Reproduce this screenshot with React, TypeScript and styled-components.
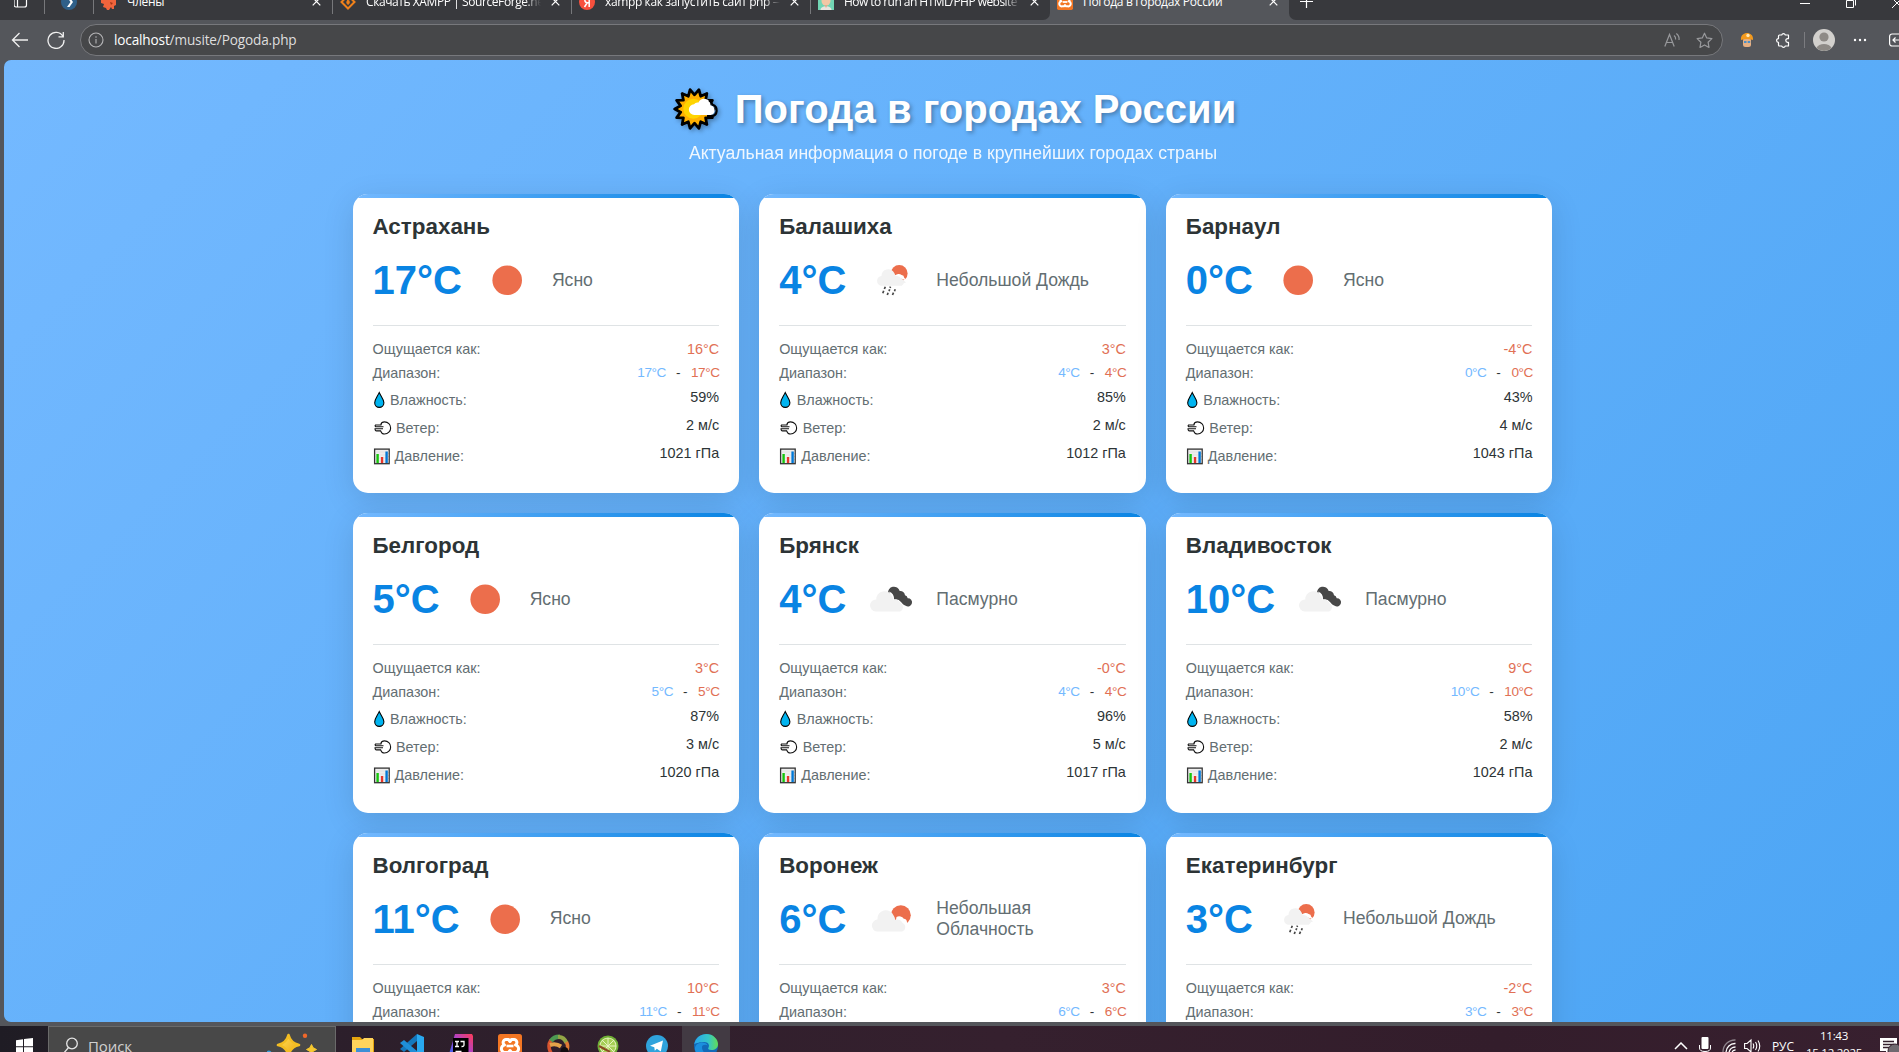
import React from "react";
import styled, { createGlobalStyle, css } from "styled-components";

const Global = createGlobalStyle`
  *, *::before, *::after { box-sizing: border-box; }
  html, body { margin: 0; padding: 0; overflow: hidden; background: #54565b; }
`;

const UI_FONT = `"Open Sans", "Noto Sans", sans-serif`;
const PAGE_FONT = `"Liberation Sans", Arial, sans-serif`;

const Desktop = styled.div`
  display: flex;
  flex-direction: column;
  width: 1899px;
  height: 1052px;
  overflow: hidden;
  background: #54565b;
  font-family: ${UI_FONT};
`;

/* ---------- tab strip ---------- */

const TabStrip = styled.div`
  display: flex;
  align-items: flex-end;
  flex: none;
  height: 20px;
  overflow: hidden;
  background: #54565b;
  color: #fff;
`;

const tabSeparator = css`
  border-right: 1px solid transparent;
  border-image: linear-gradient(to bottom, #77787b 0 30px, transparent 30px) 1;
`;

const StripCell = styled.div<{ $w: number }>`
  display: flex;
  align-items: center;
  justify-content: center;
  flex: none;
  width: ${(p) => p.$w}px;
  height: 37px;
  background: #38393d;
  ${tabSeparator}
`;

const Tab = styled.div<{ $active?: boolean; $last?: boolean }>`
  display: flex;
  align-items: center;
  flex: none;
  gap: 10px;
  width: 239px;
  height: 37px;
  padding: 0 11px 0 7px;
  font-size: 12px;
  background: ${(p) => (p.$active ? "#54565b" : "#38393d")};
  ${(p) => p.$last && "border-bottom-right-radius: 7px;"}
  ${(p) => !p.$active && !p.$last && tabSeparator}
`;

const TabTitle = styled.span<{ $fade?: boolean; $spacing?: number }>`
  flex: 1;
  overflow: hidden;
  white-space: nowrap;
  line-height: 18px;
  letter-spacing: ${(p) => p.$spacing ?? -0.3}px;
  ${(p) =>
    p.$fade &&
    css`
      mask-image: linear-gradient(to right, #000 calc(100% - 16px), transparent);
    `}
`;

const StripEnd = styled.div`
  display: flex;
  align-items: center;
  justify-content: space-between;
  flex: 1;
  min-width: 0;
  height: 37px;
  padding-left: 11px;
  border-bottom-left-radius: 7px;
  background: #38393d;
`;

const WindowButtons = styled.div`
  display: flex;
  align-items: center;
  gap: 36px;
  margin-right: -3px;
  svg { flex: none; }
`;

/* ---------- toolbar ---------- */

const Toolbar = styled.div`
  display: flex;
  align-items: center;
  flex: none;
  height: 40px;
  padding-left: 11px;
  background: #54565b;
  color: #f0f0f0;
  svg { flex: none; }
`;

const NavButtons = styled.div`
  display: flex;
  align-items: center;
  flex: none;
  gap: 18px;
  width: 69px;
`;

const AddressBar = styled.div`
  display: flex;
  align-items: center;
  flex: none;
  width: 1643px;
  height: 32px;
  padding: 0 9px 0 7px;
  border: 1px solid #77787c;
  border-radius: 16px;
  background: #464749;
`;

const Url = styled.span`
  flex: 1;
  margin-left: 10px;
  font-size: 13.6px;
  letter-spacing: -0.15px;
  line-height: 20px;
  color: #dedede;
  b { font-weight: 400; color: #fff; }
`;

const BarIcons = styled.div`
  display: flex;
  align-items: center;
  gap: 15px;
  color: #98999c;
`;

const Actions = styled.div`
  display: flex;
  align-items: center;
  flex: none;
  margin-left: 9px;
`;

const ActionSlot = styled.span<{ $w: number }>`
  display: flex;
  justify-content: center;
  flex: none;
  width: ${(p) => p.$w}px;
`;

const Rule = styled.span`
  width: 1px;
  height: 16px;
  background: #7b7c80;
`;

/* ---------- weather page ---------- */

const Viewport = styled.main`
  flex: none;
  height: 962px;
  margin-left: 4px;
  padding-left: 2px;
  overflow: hidden;
  border-radius: 7px 0 0 7px;
  background: linear-gradient(135deg, #74b9ff, #0984e3) 0 0 / 1895px 5800px no-repeat;
  font-family: ${PAGE_FONT};
`;

const Header = styled.header`
  display: flex;
  flex-direction: column;
  align-items: center;
  height: 134px;
  padding: 26px 0 0 1px;
  color: #fff;
`;

const Heading = styled.h1`
  display: flex;
  align-items: center;
  gap: 16px;
  margin: 0;
  padding-left: 3px;
  font-size: 40px;
  line-height: 46px;
  font-weight: 700;
  letter-spacing: 0.03px;
  white-space: nowrap;
  text-shadow: 2px 2px 4px rgba(0, 0, 0, 0.3);
  svg { filter: drop-shadow(2px 2px 2px rgba(0, 0, 0, 0.3)); }
`;

const Subtitle = styled.p`
  margin: 11px 0 0;
  font-size: 17.6px;
  line-height: 20px;
  opacity: 0.9;
  white-space: nowrap;
`;

const Grid = styled.section`
  display: grid;
  grid-template-columns: repeat(3, 1fr);
  gap: 20px;
  width: 1200px;
  margin: 0 auto;
`;

const Card = styled.article`
  height: 299.3px;
  padding: 0 20px;
  overflow: hidden;
  border-radius: 15px;
  background: #fff;
  box-shadow: 0 8px 32px rgba(0, 0, 0, 0.12);
  &::before {
    content: "";
    display: block;
    height: 4px;
    margin: 0 -20px 16px;
    background: linear-gradient(90deg, #74b9ff, #0984e3);
  }
`;

const CityName = styled.h2`
  margin: 0 0 10px;
  font-size: 22.4px;
  line-height: 26px;
  font-weight: 700;
  color: #2d3436;
`;

const Current = styled.div`
  display: flex;
  align-items: center;
  gap: 15px;
  height: 75px;
  padding-bottom: 15px;
  svg { flex: none; }
`;

const Temp = styled.span`
  flex: none;
  font-size: 40px;
  font-weight: 700;
  line-height: 46px;
  color: #0984e3;
`;

const Condition = styled.span`
  font-size: 17.6px;
  line-height: 21px;
  color: #636e72;
`;

const Details = styled.dl`
  display: flex;
  flex-direction: column;
  gap: 8px;
  margin: 0;
  padding-top: 15px;
  border-top: 1px solid #dfe3e5;
`;

const Row = styled.div`
  display: flex;
  justify-content: space-between;
  align-items: flex-start;
  font-size: 14.4px;
  line-height: 16px;
`;

const Label = styled.dt<{ $tall?: boolean }>`
  display: flex;
  align-items: center;
  height: ${(p) => (p.$tall ? 20 : 16)}px;
  padding-top: ${(p) => (p.$tall ? 2 : 0)}px;
  color: #636e72;
  svg { flex: none; }
`;

const Value = styled.dd<{ $hot?: boolean }>`
  margin: 0;
  color: ${(p) => (p.$hot ? "#e17055" : "#2d3436")};
`;

const Range = styled.dd`
  display: flex;
  gap: 10px;
  margin: 0;
  font-size: 13.6px;
  letter-spacing: -0.45px;
  line-height: 15px;
  color: #2d3436;
`;

const Low = styled.span` color: #74b9ff; `;
const High = styled.span`
  margin-right: -0.45px;
  padding-left: 1px;
  color: #e17055;
`;

/* ---------- taskbar ---------- */

const Taskbar = styled.footer`
  display: flex;
  flex: none;
  height: 40px;
  margin-top: 4px;
  background: linear-gradient(90deg, #1f1c24 0, #2c1f2b 330px, #35202e 1000px, #331d2b 1500px, #38202f 1899px);
  color: #fff;
  svg { flex: none; }
`;

const StartButton = styled.div`
  display: flex;
  align-items: center;
  justify-content: center;
  width: 48px;
  height: 40px;
`;

const SearchBox = styled.div`
  display: flex;
  align-items: center;
  width: 288px;
  height: 40px;
  padding: 0 16px 0 14px;
  border: 1px solid #6a6a6a;
  background: #484848;
`;

const SearchText = styled.span`
  flex: 1;
  margin-left: 9px;
  font-size: 15px;
  letter-spacing: -0.1px;
  color: #d0d0d0;
`;

const Apps = styled.div`
  display: flex;
  margin-left: 3px;
  flex: 1;
`;

const AppButton = styled.div<{ $active?: boolean }>`
  display: flex;
  align-items: center;
  justify-content: center;
  width: 48px;
  margin-right: 1px;
  height: 40px;
  background: ${(p) => (p.$active ? "#423a43" : "transparent")};
`;

const Tray = styled.div`
  display: flex;
  align-items: center;
  height: 40px;
  margin-right: -3px;
  font-size: 12px;
`;

const Lang = styled.span`
  width: 24px;
  margin-left: 10px;
  letter-spacing: -0.1px;
`;

const Clock = styled.div`
  width: 74px;
  margin: -3px 9px 0 1px;
  text-align: center;
  font-size: 11.6px;
  letter-spacing: -0.3px;
  line-height: 16.5px;
`;

/* ---------- drawings ---------- */

const CloseMark = () => (
  <svg width="9" height="9" viewBox="0 0 9 9" stroke="#fff" strokeWidth="1.2" fill="none">
    <path d="M.7.7l7.6 7.6M8.3.7L.7 8.3" />
  </svg>
);

const Sun = () => (
  <svg width="60" height="60" viewBox="0 0 60 60">
    <circle cx="30.2" cy="30.3" r="14.8" fill="#ec6e4c" />
  </svg>
);

const FewClouds = () => (
  <svg width="60" height="60" viewBox="0 0 60 60">
    <circle cx="39.8" cy="26.3" r="10" fill="#ec6e4c" />
    <path d="M34 36l1.500-8a5.500 5.500 0 0 1 7.300 1.800 3.600 3.600 0 0 1 3.200 3.400 4 4 0 0 1 2.200 3.300L45 42z" fill="#fff" />
    <path d="M16 42.600a6.100 6.100 0 0 1 .4-12.100 8.400 8.400 0 0 1 16.200-3.900 8.600 8.600 0 0 1 1.600 4.200 6.800 6.800 0 0 1 7.400 3.200 4.700 4.700 0 0 1-.3 8.600z" fill="#f2f2f2" />
  </svg>
);

const LightRain = () => (
  <svg width="60" height="60" viewBox="0 0 60 60">
    <circle cx="38.2" cy="23.400" r="8.400" fill="#ec6e4c" />
    <path d="M33 31l-.5-5.500a7 7 0 0 1 5.500-.5l3 4 4 3.500-3 1z" fill="#f2f2f2" />
    <path d="M34 26a4.400 4.400 0 0 1 6.600-1 3 3 0 0 1 2.600 2.800 3.600 3.600 0 0 1 1.800 2.700z" fill="#fff" />
    <path d="M19.800 35.700a5 5 0 0 1 .7-9.800 6.700 6.700 0 0 1 12.600-3.100 7 7 0 0 1 1.200 3.400 5.700 5.700 0 0 1 6.200 2.700 3.700 3.700 0 0 1 .3 6.800z" fill="#f2f2f2" />
    <g stroke="#484848" strokeWidth="1.700" fill="none">
      <path d="M24.300 36.800l-.9 2.200M22.700 40.800l-.9 2.400M28.700 39.300l-.7 1.800M27.100 42.800l-.8 2.200M34.200 39.300l-.7 1.900M32.500 42.600l-1 2.400" />
      <path d="M29.500 36.600l-.5 1.200" />
    </g>
  </svg>
);

const Overcast = () => (
  <svg width="60" height="60" viewBox="0 0 60 60">
    <path d="M27 24.500a6 6 0 0 1 11.700-2.500 4.600 4.600 0 0 1 5.300 4.200 3.600 3.600 0 0 1 2.700 3 4.100 4.100 0 1 1-2 7.500l-9-4z" fill="#484848" />
    <path d="M28 22.500a8 8 0 0 1 5 8 6.600 6.600 0 0 1 7 2.400l3.500 4.100-10 1z" fill="#fff" />
    <path d="M14.700 42.400a6 6 0 0 1 .6-12 8.200 8.200 0 0 1 15.600-3.500 8 8 0 0 1 1.300 3.900 6.600 6.600 0 0 1 7.200 3.200 4.600 4.600 0 0 1-.2 8.400z" fill="#f2f2f2" />
  </svg>
);

const icons = { sun: Sun, few: FewClouds, rain: LightRain, dark: Overcast };

const Drop = () => (
  <svg width="17.500" height="20" viewBox="0 0 17.5 20">
    <path d="M6.200 2.600C4.600 6.300 1.700 9.300 1.700 12.800a4.600 4.600 0 0 0 9.200 0C10.900 9.300 7.900 6.300 6.200 2.600z" fill="#00b4f0" stroke="#000" strokeWidth="1.100" />
  </svg>
);

const Wind = () => (
  <svg width="23.500" height="20" viewBox="0 0 23.5 20" fill="none" stroke="#111" strokeWidth="1.100">
    <path d="M7.800 6.800C8.200 5 9.700 3.900 11.600 3.900a6 6 0 0 1 0 12.100c-2 0-3.400-1.100-3.800-3.200" />
    <path d="M8.500 7H2.600a1 1 0 0 0 0 1.700h7.900M1.500 10.800h8.500M8 12.900H3.500a1.500 1.500 0 0 1-1.300-2" />
  </svg>
);

const Chart = () => (
  <svg width="22" height="20" viewBox="0 0 22 20">
    <rect x="1.600" y="3.100" width="14.600" height="14.600" fill="#eee" stroke="#333" strokeWidth="1.300" />
    <path d="M2 6h14M2 9h14M2 12h14M2 15h14" stroke="#d4d4d4" strokeWidth=".5" />
    <path d="M3.400 8h2.400v9H3.400z" fill="#16c60c" />
    <path d="M7.900 11h2.300v6H7.900z" fill="#e8352b" />
    <path d="M12.400 5.500h2.400V17h-2.400z" fill="#0078d7" />
  </svg>
);

const starPoints = (n: number, outer: number, inner: number) =>
  Array.from({ length: n * 2 }, (_, i) => {
    const r = i % 2 ? inner : outer;
    const a = (Math.PI * (i + 1)) / n;
    return `${(21.500 + r * Math.sin(a)).toFixed(2)},${(22 - r * Math.cos(a)).toFixed(2)}`;
  }).join(" ");

const SunBehindCloud = () => (
  <svg width="46" height="44" viewBox="0 0 46 44">
    <polygon points={starPoints(14, 19.800, 14.200)} fill="#ffb000" stroke="#000" strokeWidth="2.800" strokeLinejoin="round" />
    <circle cx="20.300" cy="21.800" r="10" fill="#ffd400" />
    <path d="M21.500 28a5.400 5.400 0 0 1-.500-10.800 4.500 4.500 0 0 1 4.500-1.700 6.300 6.300 0 0 1 12 2.800 5 5 0 0 1 .500 9.700z" fill="#fff" />
    <path d="M34 29.200h4.500a5.900 5.900 0 0 0 1-11.500q-.800-3.200-3.500-4.500" fill="none" stroke="#000" strokeWidth="2.200" />
  </svg>
);

const XamppMark = ({ size }: { size: number }) => (
  <svg width={size} height={size} viewBox="0 0 24 24">
    <rect width="24" height="24" rx="2.500" fill="#f37623" />
    <path d="M8 5.500h2.500L12 7.500l1.500-2H16a3 3 0 0 1 1.500 5.500 3.800 3.800 0 0 1-1.500 7.500h-2.500L12 16.500l-1.500 2H8A3.800 3.800 0 0 1 6.500 11 3 3 0 0 1 8 5.500z" fill="none" stroke="#fff" strokeWidth="3" strokeLinejoin="round" />
    <path d="M8.500 12h7" stroke="#fff" strokeWidth="2.600" />
  </svg>
);

/* ---------- data ---------- */

type City = {
  name: string;
  t: string;
  icon: keyof typeof icons;
  sky: string;
  feels: string;
  humidity?: number;
  wind?: number;
  pressure?: number;
};

const cities: City[] = [
  { name: "Астрахань", t: "17", icon: "sun", sky: "Ясно", feels: "16", humidity: 59, wind: 2, pressure: 1021 },
  { name: "Балашиха", t: "4", icon: "rain", sky: "Небольшой Дождь", feels: "3", humidity: 85, wind: 2, pressure: 1012 },
  { name: "Барнаул", t: "0", icon: "sun", sky: "Ясно", feels: "-4", humidity: 43, wind: 4, pressure: 1043 },
  { name: "Белгород", t: "5", icon: "sun", sky: "Ясно", feels: "3", humidity: 87, wind: 3, pressure: 1020 },
  { name: "Брянск", t: "4", icon: "dark", sky: "Пасмурно", feels: "-0", humidity: 96, wind: 5, pressure: 1017 },
  { name: "Владивосток", t: "10", icon: "dark", sky: "Пасмурно", feels: "9", humidity: 58, wind: 2, pressure: 1024 },
  { name: "Волгоград", t: "11", icon: "sun", sky: "Ясно", feels: "10" },
  { name: "Воронеж", t: "6", icon: "few", sky: "Небольшая Облачность", feels: "3" },
  { name: "Екатеринбург", t: "3", icon: "rain", sky: "Небольшой Дождь", feels: "-2" },
];

const WeatherCard = ({ c }: { c: City }) => {
  const Icon = icons[c.icon];
  return (
    <Card>
      <CityName>{c.name}</CityName>
      <Current>
        <Temp>{c.t}°C</Temp>
        <Icon />
        <Condition>{c.sky}</Condition>
      </Current>
      <Details>
        <Row><Label>Ощущается как:</Label><Value $hot>{c.feels}°C</Value></Row>
        <Row><Label>Диапазон:</Label><Range><Low>{c.t}°C</Low><span>-</span><High>{c.t}°C</High></Range></Row>
        {c.humidity !== undefined && (
          <>
            <Row><Label $tall><Drop />Влажность:</Label><Value>{c.humidity}%</Value></Row>
            <Row><Label $tall><Wind />Ветер:</Label><Value>{c.wind} м/с</Value></Row>
            <Row><Label $tall><Chart />Давление:</Label><Value>{c.pressure} гПа</Value></Row>
          </>
        )}
      </Details>
    </Card>
  );
};

const Tabs = () => (
  <TabStrip>
    <StripCell $w={45}>
      <svg width="16" height="16" viewBox="0 0 16 16" fill="none" stroke="#fff" strokeWidth="1.200">
        <rect x="0" y="1" width="12.500" height="12" rx="2" /><path d="M3.500 3v10" />
      </svg>
    </StripCell>
    <StripCell $w={49}>
      <svg width="16" height="16" viewBox="0 0 16 16">
        <circle cx="8" cy="8" r="8" fill="#2f6089" />
        <path d="M6 3l3.500 5L6 13h2.500L12 8 8.500 3z" fill="#fff" />
      </svg>
    </StripCell>
    <Tab>
      <svg width="16" height="16" viewBox="0 0 16 16" fill="#f0643c">
        <path d="M2 3h11l2 3v5l-2 1v3h-2l-1-2-2 3H6l-1-2-3-1 1-3-3-1V6z" />
        <path d="M9 8l3 1-2 2z" fill="#a43417" />
      </svg>
      <TabTitle>Члены</TabTitle><CloseMark />
    </Tab>
    <Tab>
      <svg width="16" height="16" viewBox="0 0 16 16" fill="none" stroke="#f0811a" strokeWidth="2">
        <path d="M8 1.500L1.500 8 8 14.500 14.500 8z" /><path d="M8 5.500c2 2 1.600 4.500 0 4.800-1.600-.3-1.600-2.600 0-4.800z" fill="#f0811a" strokeWidth="1" />
      </svg>
      <TabTitle $fade $spacing={-0.42}>Скачать XAMPP | SourceForge.net</TabTitle><CloseMark />
    </Tab>
    <Tab>
      <svg width="16" height="16" viewBox="0 0 16 16">
        <circle cx="8" cy="8" r="8" fill="#f7503d" />
        <path d="M10.200 13V3.300H8.800C5 3.300 5 8.500 8.300 8.700L5.500 13M8.300 8.700h1.900" stroke="#fff" strokeWidth="1.500" fill="none" />
      </svg>
      <TabTitle $fade $spacing={-0.38}>xampp как запустить сайт php —</TabTitle><CloseMark />
    </Tab>
    <Tab $last>
      <svg width="16" height="16" viewBox="0 0 16 16">
        <rect width="16" height="16" fill="#72d5b4" />
        <circle cx="8" cy="7" r="4.500" fill="#f2c7a5" /><path d="M3 6C3 1 13 1 13 6L11 4H6z" fill="#4a3a35" />
        <path d="M2.500 16c0-5 11-5 11 0z" fill="#e8e5df" /><path d="M6.500 11h3L8 14z" fill="#e3a98a" />
      </svg>
      <TabTitle $fade $spacing={-0.55}>How to run an HTML/PHP website</TabTitle><CloseMark />
    </Tab>
    <Tab $active>
      <XamppMark size={16} />
      <TabTitle>Погода в городах России</TabTitle>
      <CloseMark />
    </Tab>
    <StripEnd>
      <svg width="13" height="13" viewBox="0 0 13 13" stroke="#fff" strokeWidth="1.200"><path d="M6.500 0v13M0 6.500h13" /></svg>
      <WindowButtons>
        <svg width="10" height="12" viewBox="0 0 10 12" stroke="#fff"><path d="M0 7.500h10" /></svg>
        <svg width="10" height="12" viewBox="0 0 10 12" stroke="#fff" fill="none"><path d="M.5 4.500h7v7h-7zM2.500 2.500h7v7" /></svg>
        <svg width="10" height="12" viewBox="0 0 10 12" stroke="#fff" fill="none"><path d="M0 2l10 10M10 2L0 12" /></svg>
      </WindowButtons>
    </StripEnd>
  </TabStrip>
);

const BrowserToolbar = () => (
  <Toolbar>
    <NavButtons>
      <svg width="18" height="18" viewBox="0 0 18 18" fill="none" stroke="currentColor" strokeWidth="1.300"><path d="M17 9H1.500M8.500 2L1.500 9l7 7" /></svg>
      <svg width="18" height="18" viewBox="0 0 18 18" fill="none" stroke="currentColor" strokeWidth="1.300">
        <path d="M16 5.500A8 8 0 1 0 17 9M16.300 1v4.800h-4.800" />
      </svg>
    </NavButtons>
    <AddressBar>
      <svg width="16" height="16" viewBox="0 0 16 16" fill="none" stroke="#b5b5b7" strokeWidth="1.100"><circle cx="8" cy="8" r="7" /><path d="M8 7v4.500M8 4.300v1.400" /></svg>
      <Url><b>localhost</b>/musite/Pogoda.php</Url>
      <BarIcons>
        <svg width="17" height="16" viewBox="0 0 17 16" fill="none" stroke="currentColor" strokeWidth="1.200"><path d="M.8 14.500L5.500 2.500l4.700 12M2.300 10.500h6.500M10 3.500q2 1.500 1.600 4M12.300 1.500q3.400 2.600 2.700 6.500" /></svg>
        <svg width="17" height="17" viewBox="0 0 17 17" fill="none" stroke="currentColor" strokeWidth="1.200" strokeLinejoin="round"><path d="M8.500 1.200l2.200 4.700 5.200.7-3.800 3.600.9 5.200-4.500-2.500L4 15.400l.9-5.200L1.100 6.600l5.200-.7z" /></svg>
      </BarIcons>
    </AddressBar>
    <Actions>
      <ActionSlot $w={30}>
        <svg width="14" height="16" viewBox="0 0 14 16">
          <rect x="3" y="6" width="8" height="9" rx="2.500" fill="#e8b184" />
          <path d="M1 8C.5 3 4 1 7 1s6.500 2 6 7c-4-1.500-8-1.500-12 0z" fill="#f39a1e" />
          <circle cx="8" cy="3.500" r="1.700" fill="#ffe9b8" /><path d="M4 10h2.500M7.700 10h2.500" stroke="#4a90c8" strokeWidth="2" />
        </svg>
      </ActionSlot>
      <ActionSlot $w={42}>
        <svg width="16" height="17" viewBox="0 0 16 17" fill="none" stroke="#fff" strokeWidth="1.200" strokeLinejoin="round">
          <path d="M4.500 3h2.200a1.900 1.900 0 0 1 3.600 0h3.200v3.600h-.8a1.900 1.900 0 0 0 0 3.800h.8V14h-3.200a1.900 1.900 0 0 1-3.600 0H4A1.500 1.500 0 0 1 3.500 13v-2.600a1.900 1.900 0 0 1 0-3.800V4q0-1 1-1z" />
        </svg>
      </ActionSlot>
      <Rule />
      <ActionSlot $w={38}>
        <svg width="22" height="22" viewBox="0 0 22 22">
          <circle cx="11" cy="11" r="11" fill="#d2d0cd" /><circle cx="11" cy="8" r="4.600" fill="#8e8a86" />
          <path d="M3.500 19c2-5.500 13-5.500 15 0a11 11 0 0 1-15 0z" fill="#8e8a86" />
        </svg>
      </ActionSlot>
      <ActionSlot $w={34}>
        <svg width="14" height="4" viewBox="0 0 14 4" fill="#fff"><circle cx="2" cy="2" r="1.200" /><circle cx="7" cy="2" r="1.200" /><circle cx="12" cy="2" r="1.200" /></svg>
      </ActionSlot>
      <ActionSlot $w={40}>
        <svg width="16" height="14" viewBox="0 0 16 14" fill="none" stroke="#fff" strokeWidth="1.200">
          <rect x=".6" y="1" width="14.500" height="12" rx="2.500" /><path d="M11 7H4M6.500 4.500L4 7l2.500 2.500" />
        </svg>
      </ActionSlot>
    </Actions>
  </Toolbar>
);

const WindowsTaskbar = () => (
  <Taskbar>
    <StartButton>
      <svg width="17" height="17" viewBox="0 0 17 17" fill="#fff"><path d="M0 2.300l7-1v6.900H0zM8 1.100L17 0v8.200H8zM0 9.200h7v6.700l-7-1zM8 9.200h9V17l-9-1.200z" /></svg>
    </StartButton>
    <SearchBox>
      <svg width="16" height="18" viewBox="0 0 16 18" fill="none" stroke="#e6e6e6" strokeWidth="1.300"><circle cx="9" cy="6.500" r="5.300" /><path d="M5.500 10.500L.5 16.500" /></svg>
      <SearchText>Поиск</SearchText>
      <svg width="52" height="34" viewBox="0 0 52 34">
        <defs><linearGradient id="gold" x1="0" y1="0" x2="1" y2="1"><stop offset="0" stopColor="#ffe15a" /><stop offset="1" stopColor="#eda612" /></linearGradient></defs>
        <path d="M21.500 6q2 8 10.500 10-8.500 2-10.500 10-2-8-10.500-10 8.500-2 10.500-10z" fill="url(#gold)" stroke="#f3bd22" strokeWidth="2.600" strokeLinejoin="round" />
        <path d="M44.500 15.500q1 4 5 5-4 1-5 5-1-4-5-5 4-1 5-5z" fill="#f8c92f" stroke="#f8c92f" strokeLinejoin="round" />
        <circle cx="38" cy="6.800" r="2.200" fill="#f0682a" /><circle cx="2" cy="24" r="2.500" fill="#3aa0dd" />
      </svg>
    </SearchBox>
    <Apps>
      <AppButton>
        <svg width="24" height="24" viewBox="0 0 24 24"><path d="M1 3h8l2 2h12v17H1z" fill="#e5a50f" /><path d="M1 6h10l2-2h9v18H1z" fill="#ffd45c" /><path d="M5 22v-8h14v8h-4v-4H9v4z" fill="#3c8fd6" /></svg>
      </AppButton>
      <AppButton>
        <svg width="24" height="24" viewBox="0 0 24 24"><path d="M17 0l7 3v18l-7 3z" fill="#29a9f0" /><path d="M17 0v7L4 18l-4-3z" fill="#1478bd" /><path d="M17 24v-7L4 6 0 9z" fill="#1f8fd8" /></svg>
      </AppButton>
      <AppButton>
        <svg width="26" height="24" viewBox="0 0 26 24">
          <defs><linearGradient id="ij" x1="0" y1="1" x2="1" y2="0"><stop offset="0" stopColor="#176ff3" /><stop offset=".5" stopColor="#a344d8" /><stop offset="1" stopColor="#ff3b55" /></linearGradient></defs>
          <path d="M7 0h17l1 2v16l-7 6H3L1 20z" fill="url(#ij)" /><rect x="5" y="4" width="15.500" height="16" fill="#000" />
          <path d="M7 7.500h4M9 7.500v5M7 12.500h4M12.500 7.500H16v3.500q0 1.700-2.500 1.500M7.500 17.500h6" stroke="#fff" strokeWidth="1.300" fill="none" />
        </svg>
      </AppButton>
      <AppButton><XamppMark size={24} /></AppButton>
      <AppButton>
        <svg width="24" height="24" viewBox="0 0 24 24" fill="none">
          <path d="M4 19Q0 12 4 6" stroke="#d9542f" strokeWidth="3.500" /><path d="M4 7Q7 2.500 13 2.800" stroke="#4d9a52" strokeWidth="4.500" /><path d="M11 3q6-.5 8.500 6" stroke="#93a545" strokeWidth="4" />
          <path d="M3 11q6-2 11 1.500" stroke="#e4a44a" strokeWidth="4" /><path d="M19.500 8q2 4 .5 8" stroke="#e07a33" strokeWidth="3.500" /><ellipse cx="17.500" cy="17.500" rx="4" ry="4.500" fill="#120d10" />
        </svg>
      </AppButton>
      <AppButton>
        <svg width="22" height="22" viewBox="0 0 22 22"><circle cx="11" cy="11" r="10.500" fill="#6fae35" /><circle cx="11" cy="11" r="8.600" fill="#e3efb4" /><circle cx="11" cy="11" r="7.600" fill="#a6cf55" /><path d="M11 3v16M3 11h16M5 5l12 12M17 5L5 17" stroke="#e9f4c4" strokeWidth="1" /><path d="M2 11l11 6" stroke="#8a4a22" strokeWidth="2" /></svg>
      </AppButton>
      <AppButton>
        <svg width="22" height="22" viewBox="0 0 22 22"><circle cx="11" cy="11" r="11" fill="#2fa3dc" /><path d="M4 10.800L17 5.500l-2.200 11-4-2.800-2 2-.5-3.500z" fill="#fff" /></svg>
      </AppButton>
      <AppButton $active>
        <svg width="24" height="24" viewBox="0 0 24 24">
          <defs><linearGradient id="edge"><stop offset="0" stopColor="#2aa6ec" /><stop offset=".6" stopColor="#35c6c6" /><stop offset="1" stopColor="#63dd55" /></linearGradient></defs>
          <circle cx="12" cy="12" r="12" fill="#1269b8" /><path d="M.3 10C1.500 3.500 7 0 12.500 0 19 0 24 5 24 10c0 4-3 6-6.500 6-3 0-4-1-3-2.500 1.500-2.500-.5-5.500-4-5.500-4 0-8.500 1-10.200 2z" fill="url(#edge)" />
          <path d="M8 13c0 5 4 8 9 7-4 5-14 3-16-4-.5-4 2-7 7-7.500 3 0 5 1 5.500 3-2-1.500-5.500-.5-5.500 1.500z" fill="#1b8fde" />
        </svg>
      </AppButton>
    </Apps>
    <Tray>
      <svg width="14" height="8" viewBox="0 0 14 8" fill="none" stroke="#fff" strokeWidth="1.500"><path d="M1 7l6-6 6 6" /></svg>
      <svg width="34" height="18" viewBox="-11 0 34 18"><rect x="2.500" y="0" width="7" height="12" rx="1" fill="#fff" /><path d="M.5 8v3q0 3.500 5.500 3.500t5.500-3.500V8M6 15v3" stroke="#fff" fill="none" /></svg>
      <svg width="14" height="14" viewBox="0 0 14 14" fill="none" strokeWidth="1.300"><path d="M1 13A12 12 0 0 1 13.500 1" stroke="#8f858d" /><path d="M4 13.500A9 9 0 0 1 13.500 4.500M7 13.500a6.500 6.500 0 0 1 6.500-5.500M10 13.500a3.500 3.500 0 0 1 3.500-2.500" stroke="#fff" /></svg>
      <svg width="26" height="16" viewBox="-8 0 26 16" fill="none" stroke="#fff" strokeWidth="1.100"><path d="M.6 5.500h2.500L7 2v12L3.100 10.500H.6zM9 5.500q1.500 2.500 0 5M11.500 4q2.500 4 0 8M14 2.500q3.500 5.500 0 11" /></svg>
      <Lang>РУС</Lang>
      <Clock>11:43<br />15.12.2025</Clock>
      <svg width="22" height="22" viewBox="0 0 22 22"><path d="M0 3h17v13h-8l-3 3v-3H0z" fill="#fff" /><path d="M3 6.500h11M3 9.500h11M3 12.500h6" stroke="#35202e" strokeWidth="1.300" /><circle cx="15" cy="16" r="7" fill="#6f6a70" stroke="#35202e" /></svg>
    </Tray>
  </Taskbar>
);

export default function App() {
  return (
    <Desktop>
      <Global />
      <Tabs />
      <BrowserToolbar />
      <Viewport>
        <Header>
          <Heading><SunBehindCloud />Погода в городах России</Heading>
          <Subtitle>Актуальная информация о погоде в крупнейших городах страны</Subtitle>
        </Header>
        <Grid>{cities.map((c) => <WeatherCard key={c.name} c={c} />)}</Grid>
      </Viewport>
      <WindowsTaskbar />
    </Desktop>
  );
}
